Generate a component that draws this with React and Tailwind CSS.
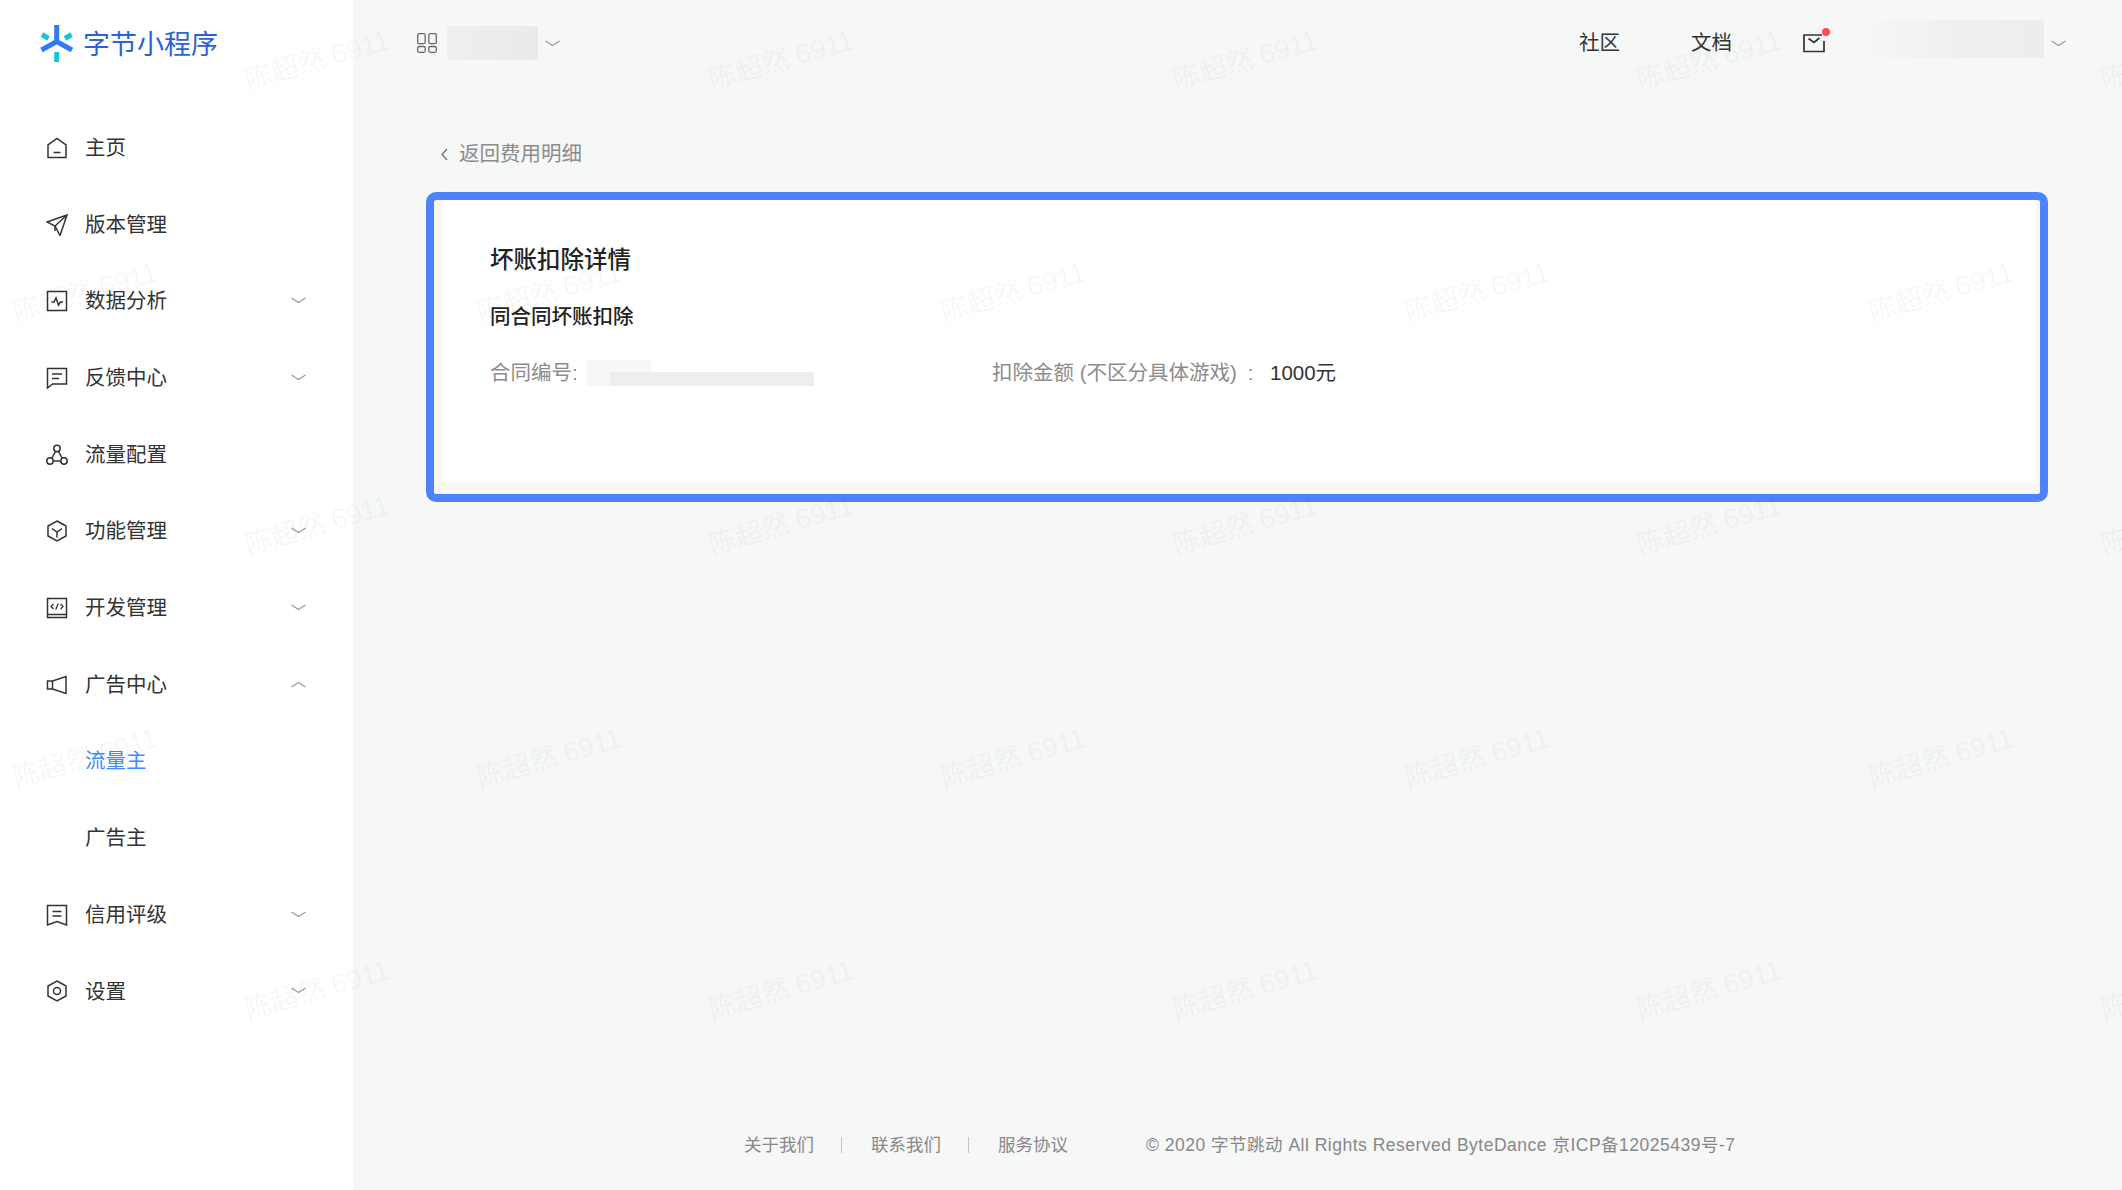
import { Fragment } from 'react'

const Stroke = ({ children, className = 'w-[22px] h-[22px]' }) => (
  <svg viewBox="0 0 22 22" fill="none" stroke="#333" strokeWidth="1.5" className={`${className} shrink-0 -mt-[1px]`}>
    {children}
  </svg>
)

const HomeIcon = () => (
  <Stroke><path d="M2 20.5V8L11 1.5 20 8v12.5H2Z" /><path d="M7.5 15.5h7" /></Stroke>
)
const SendIcon = () => (
  <Stroke><path d="M21 1 1 8l8 4 5 9.5L21 1Z" /><path d="M20.5 1.5 9 12v5" /></Stroke>
)
const ChartIcon = () => (
  <Stroke><path d="M1.5 1.5h19v19h-19z" /><path d="M5.5 12H8l2-4 2.5 7 2-3H17" /></Stroke>
)
const FeedbackIcon = () => (
  <Stroke><path d="M1.5 1.5h19V17H6.5l-5 4V1.500Z" /><path d="M6 7h10M6 11.500h7" /></Stroke>
)
const FlowIcon = () => (
  <Stroke>
    <circle cx="11" cy="4.500" r="3.200" />
    <circle cx="4" cy="17" r="3.200" />
    <circle cx="18" cy="17" r="3.200" />
    <path d="M9.500 7.500 6 13.800M12.500 7.500l3.500 6.300M7.200 17h7.600" />
  </Stroke>
)
const BoxIcon = () => (
  <Stroke><path d="M11 1 20 6v10l-9 5-9-5V6l9-5Z" /><path d="m6 8.500 5 3.500 5-3.500M11 12v5.500" /></Stroke>
)
const CodeIcon = () => (
  <Stroke>
    <path d="M1.500 1.500h19v19h-19zM1.500 17.500h19" />
    <path strokeWidth="1.300" d="M7.500 7 5 9.500 7.500 12M14.500 7 17 9.500 14.500 12M12.200 6.500l-2.400 6" />
  </Stroke>
)
const HornIcon = () => (
  <Stroke><path d="M1.500 7h5v8h-5zM6.500 7 20 2.500v17L6.500 15" /></Stroke>
)
const CreditIcon = () => (
  <Stroke><path d="M1.500 1.500h19V21L11 17.500 1.500 21V1.500Z" /><path d="M6.500 7.500h9M6.500 12h9" /></Stroke>
)
const SettingIcon = () => (
  <Stroke><path d="M11 1 20 6v10l-9 5-9-5V6l9-5Z" /><circle cx="11" cy="11" r="3.500" /></Stroke>
)

const Chevron = ({ up = false }) => (
  <svg viewBox="0 0 15 7" fill="none" stroke="#9a9a9a" strokeWidth="1.200" className={`w-[15px] h-[7px] shrink-0 ${up ? 'rotate-180' : ''}`}>
    <path d="M0.500 1 7.500 5.500 14.500 1" />
  </svg>
)

const Logo = () => (
  <svg viewBox="0 0 34 37" fill="none" strokeWidth="5" className="w-[34px] h-[37px] shrink-0">
    <path stroke="#2f7bf6" d="M16.700 0v18M1.500 25l15.200-8.500L32 25" />
    <path stroke="#12c8d6" d="M2 9.500 8.500 13.500M31.500 9.500 25 13.500M16.700 27v10" />
  </svg>
)

const MENU = [
  { label: '主页', icon: HomeIcon },
  { label: '版本管理', icon: SendIcon },
  { label: '数据分析', icon: ChartIcon, arrow: 'down' },
  { label: '反馈中心', icon: FeedbackIcon, arrow: 'down' },
  { label: '流量配置', icon: FlowIcon },
  { label: '功能管理', icon: BoxIcon, arrow: 'down' },
  { label: '开发管理', icon: CodeIcon, arrow: 'down' },
  { label: '广告中心', icon: HornIcon, arrow: 'up' },
  { label: '流量主', sub: true, active: true },
  { label: '广告主', sub: true },
  { label: '信用评级', icon: CreditIcon, arrow: 'down' },
  { label: '设置', icon: SettingIcon, arrow: 'down' },
]

// watermark tile centres, every other row is shifted
const WATERMARKS = [60, 292, 525, 758, 990].flatMap((y, row) =>
  [0, 1, 2, 3, 4].map((col) => ({ x: (row % 2 === 0 ? 317 : 85) + col * 464, y }))
)

function Sidebar() {
  return (
    <aside className="w-[353px] shrink-0 bg-white">
      <div className="h-[87px] flex items-center pl-[40px] gap-[9px]">
        <Logo />
        <span className="text-[27px] leading-none text-[#2c62d6] mt-[3px]">字节小程序</span>
      </div>
      <nav className="pt-[23px]">
        {MENU.map((item) => (
          <div key={item.label} className="h-[76.700px] flex items-center pl-[46px] pr-[47px]">
            {item.icon && <item.icon />}
            <span className={`text-[20.500px] ${item.sub ? 'ml-[39px]' : 'ml-[17px]'} ${item.active ? 'text-[#3c8cff]' : 'text-[#333]'}`}>
              {item.label}
            </span>
            {item.arrow && (
              <span className="ml-auto -mt-[2px]">
                <Chevron up={item.arrow === 'up'} />
              </span>
            )}
          </div>
        ))}
      </nav>
    </aside>
  )
}

function Header() {
  return (
    <header className="h-[86px] flex items-center pl-[64px] pr-[56px]">
      <svg viewBox="0 0 20 20" fill="none" stroke="#666" strokeWidth="1.300" className="w-[20px] h-[20px] shrink-0">
        <rect x="0.700" y="0.700" width="7.500" height="10" rx="1.500" />
        <rect x="11.800" y="0.700" width="7.500" height="10" rx="1.500" />
        <rect x="0.700" y="13.500" width="7.500" height="5.800" rx="1.500" />
        <rect x="11.800" y="13.500" width="7.500" height="5.800" rx="1.500" />
      </svg>
      <div className="ml-[10px] w-[91px] h-[34px] bg-gradient-to-r from-[#efefef] to-[#e9eaea]" />
      <span className="ml-[7px]"><Chevron /></span>

      <span className="ml-auto mt-[1px] text-[20.500px] text-[#333]">社区</span>
      <span className="ml-[71px] mt-[1px] text-[20.500px] text-[#333]">文档</span>
      <div className="ml-[71px] relative w-[22px] h-[20px]">
        <svg viewBox="0 0 22 20" fill="none" stroke="#333" strokeWidth="1.700" className="w-[22px] h-[20px]">
          <path d="M19 2H1v16.500h20V8" />
          <path d="m5.500 5.500 5.500 4 5.500-4.500" />
        </svg>
        <span className="absolute -top-[5px] -right-[5px] w-[8px] h-[8px] rounded-full bg-[#ff4d5a]" />
      </div>
      <div className="ml-[47px] -mt-[8px] w-[172px] h-[38px] bg-gradient-to-r from-[#f5f6f6] via-[#eeefef] to-[#ecedee]" />
      <span className="ml-[7px]"><Chevron /></span>
    </header>
  )
}

function Card() {
  return (
    <div className="ml-[73px] mr-[74px] h-[310px] border-[8px] border-[#4f83fd] rounded-[10px] pl-[8px] pr-[4px] pb-[11px]">
      <div className="h-full bg-white rounded-[3px] pl-[48px] pt-[45px]">
        <h2 className="text-[23.500px] leading-[30px] font-medium text-[#222]">坏账扣除详情</h2>
        <h3 className="mt-[27px] text-[20.500px] leading-[30px] font-medium text-[#222]">同合同坏账扣除</h3>
        <div className="mt-[26px] flex items-center text-[20.500px] leading-[30px] text-[#8c8c8c]">
          <span className="w-[96px]">合同编号:</span>
          <div className="w-[228px] h-[26px] flex flex-col">
            <div className="w-[65px] h-[12px] bg-[#f7f7f7]" />
            <div className="h-[14px] flex">
              <div className="w-[24px] bg-[#f7f7f7]" />
              <div className="flex-1 bg-[#eeeeee]" />
            </div>
          </div>
          <span className="ml-[178px] w-[278px]">
            扣除金额 (不区分具体游戏)<span className="ml-[11px]">:</span>
          </span>
          <span className="text-[#333]">1000元</span>
        </div>
      </div>
    </div>
  )
}

function Footer() {
  const links = ['关于我们', '联系我们', '服务协议']
  return (
    <footer className="mt-auto h-[90px] flex items-center pl-[391px] text-[17.500px] text-[#888]">
      {links.map((link, i) => (
        <Fragment key={link}>
          {i > 0 && <span className="w-px h-[16px] bg-[#c4c4c4] ml-[27px] mr-[29px]" />}
          <span>{link}</span>
        </Fragment>
      ))}
      <span className="ml-[78px] tracking-[0.500px]">© 2020 字节跳动 All Rights Reserved ByteDance 京ICP备12025439号-7</span>
    </footer>
  )
}

export default function App() {
  return (
    <div className="relative flex h-[1190px] overflow-hidden bg-[#f6f7f7] font-['Liberation_Sans','Noto_Sans_CJK_SC',sans-serif]">
      <Sidebar />
      <main className="flex-1 flex flex-col min-w-0">
        <Header />
        <div className="h-[106px] pt-[50px] pl-[88px] flex items-start">
          <div className="h-[36px] flex items-center">
            <svg viewBox="0 0 7 13" fill="none" stroke="#777" strokeWidth="1.400" className="w-[7px] h-[13px]">
              <path d="M6 1 1 6.500 6 12" />
            </svg>
            <span className="ml-[11px] text-[20.500px] text-[#8c8c8c]">返回费用明细</span>
          </div>
        </div>
        <Card />
        <Footer />
      </main>

      {WATERMARKS.map((m) => (
        <span
          key={`${m.x}-${m.y}`}
          className="absolute pointer-events-none whitespace-nowrap text-[27.500px] leading-none text-black/[0.05] -translate-x-1/2 -translate-y-1/2 -rotate-[16deg]"
          style={{ left: m.x, top: m.y }}
        >
          陈超然 6911
        </span>
      ))}
    </div>
  )
}
